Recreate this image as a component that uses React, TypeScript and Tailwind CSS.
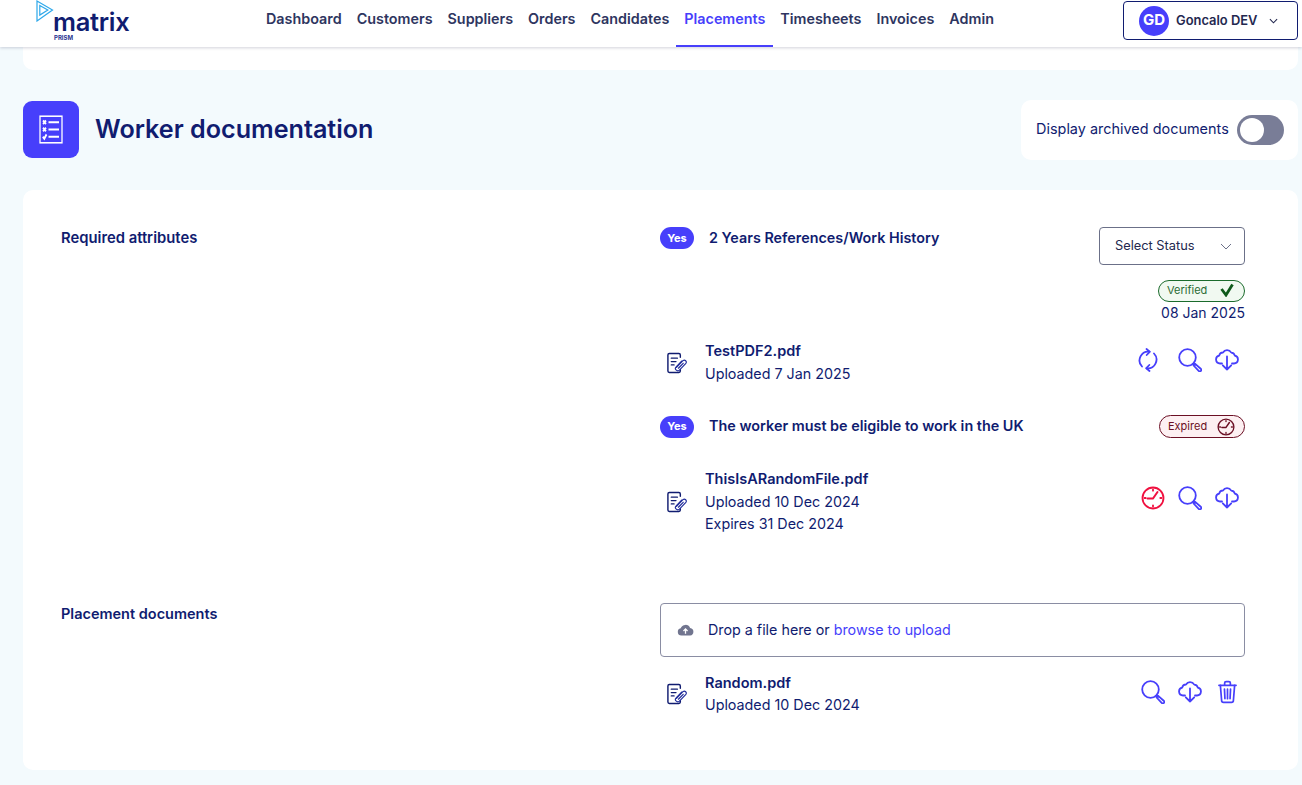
import React from "react";

const stroke = { fill: "none", stroke: "currentColor", strokeWidth: 1.8, strokeLinecap: "round" as const, strokeLinejoin: "round" as const };

function Search({ className = "" }: { className?: string }) {
  return (
    <svg viewBox="0 0 24 24" className={className} {...stroke}>
      <circle cx="9.500" cy="9.500" r="8.300" />
      <path d="M15.500 15.500l1.500 1.500" />
      <path d="M17.200 15.800l5.800 5.200a1.500 1.500 0 0 1-2.100 2.100L15.600 17.500a1.200 1.200 0 0 1 1.600-1.700z" />
    </svg>
  );
}
function CloudDown({ className = "" }: { className?: string }) {
  return (
    <svg viewBox="0 0 24 22" className={className} {...stroke}>
      <path d="M7 14.500H5a4 4 0 0 1-.8-7.900A3.800 3.800 0 0 1 8 3.500 5 5 0 0 1 12 1.200a5 5 0 0 1 4.300 2.400 3.800 3.800 0 0 1 3.500 3 4 4 0 0 1-.8 7.900H17" />
      <path d="M12 7.500v13M7.800 16.300l4.200 4.200 4.200-4.200" />
    </svg>
  );
}
function Refresh({ className = "" }: { className?: string }) {
  return (
    <svg viewBox="0 0 20 24" className={className} {...stroke}>
      <path d="M4 18.500A8.800 8.800 0 0 1 11.500 3.700" />
      <path d="M8.500 1l3.200 2.800L8.700 7" />
      <path d="M16 5.500A8.800 8.800 0 0 1 8.500 20.300" />
      <path d="M11.500 23l-3.200-2.800 3-3.200" />
    </svg>
  );
}
function Clock({ className = "" }: { className?: string }) {
  return (
    <svg viewBox="0 0 24 24" className={className} {...stroke}>
      <circle cx="12" cy="12" r="10.500" />
      <path d="M12 12.500l4.500-6.500M12 12.500H6.500" strokeWidth="2" />
      <path d="M12 3.500v1.200M12 19.300v1.200M3.500 12h1.200M19.300 12h1.200" />
    </svg>
  );
}
function Trash({ className = "" }: { className?: string }) {
  return (
    <svg viewBox="0 0 20 24" className={className} {...stroke}>
      <path d="M1 5h18M7 5V2.500A1.500 1.500 0 0 1 8.500 1h3A1.500 1.500 0 0 1 13 2.500V5" />
      <path d="M2.500 5l1.300 16a2 2 0 0 0 2 2h8.400a2 2 0 0 0 2-2L17.500 5" />
      <path d="M6.800 9l.5 10M10 9v10M13.200 9l-.5 10" />
    </svg>
  );
}
function FileClip() {
  return (
    <svg viewBox="0 0 22 22" className="w-[21px] h-[22px] shrink-0">
      <path d="M15 5V2.500A1.500 1.500 0 0 0 13.500 1h-10A1.500 1.500 0 0 0 2 2.500v17A1.500 1.500 0 0 0 3.500 21h10a1.500 1.500 0 0 0 1.500-1.500V18" fill="none" stroke="#101c70" strokeWidth="1.500" strokeLinecap="round" />
      <path d="M5.500 6h6.500M5.500 9.500h5M5.500 13h3" fill="none" stroke="#101c70" strokeWidth="1.300" strokeLinecap="round" />
      <path d="M11 15.500l6.800-7a2.100 2.100 0 0 1 3 2.900l-6.700 7a2.600 2.600 0 0 1-3.600-.1 2.300 2.300 0 0 1 .1-3.200l6-6.200M13 16.500l5-5.200" fill="none" stroke="#1e2a9a" strokeWidth="1.200" strokeLinecap="round" />
    </svg>
  );
}

function Yes() {
  return (
    <span className="w-[34px] h-[22px] rounded-full bg-[#473ffb] text-white text-[11px] font-bold flex items-center justify-center shrink-0">Yes</span>
  );
}

function FileRow({ name, lines, actions }: { name: string; lines: string[]; actions: React.ReactNode }) {
  return (
    <div className="flex items-center">
      <div className="w-[45px] pl-[6px]">
        <FileClip />
      </div>
      <div className="flex-1 text-[14.300px] leading-[22.500px] text-[#101c70]">
        <div className="font-semibold text-[14.500px]">{name}</div>
        {lines.map((l) => (
          <div key={l}>{l}</div>
        ))}
      </div>
      {actions}
    </div>
  );
}

const nav = ["Dashboard", "Customers", "Suppliers", "Orders", "Candidates", "Placements", "Timesheets", "Invoices", "Admin"];

export default function App() {
  return (
    <div className="h-[785px] overflow-hidden bg-[#f3fafd] font-['Inter',sans-serif] text-[#101c70]">
      <header className="h-[47px] bg-white shadow-[0_1px_3px_rgba(30,30,70,0.2)] relative z-10 flex">
        <div className="w-[266px] relative">
          <svg viewBox="0 0 18 22" className="absolute left-[36px] top-0 w-[18px] h-[22px]" fill="none" stroke="#2ea8ea" strokeWidth="1.200">
            <path d="M1 1l15.500 9L1 21z" />
            <path d="M3.800 5.500l8 4.600-8 5z" />
          </svg>
          <div className="absolute left-[53px] top-[10px] text-[25.500px] leading-[24px] font-semibold text-[#101c70] tracking-[-0.3px]">matrix</div>
          <div className="absolute left-[54px] top-[35px] text-[6px] leading-[6px] font-bold text-[#2a3590]">PRISM</div>
        </div>
        <nav className="flex gap-[15px] text-[14.350px] font-semibold text-[#2e3560]">
          {nav.map((n) => (
            <a
              key={n}
              className={
                n === "Placements"
                  ? "h-[47px] leading-[38px] text-[#473ffb] relative after:absolute after:left-[-8px] after:right-[-8px] after:bottom-0 after:h-[2px] after:bg-[#473ffb]"
                  : "h-[47px] leading-[38px]"
              }
            >
              {n}
            </a>
          ))}
        </nav>
        <div className="ml-auto mr-[4px] mt-[1px] w-[175px] h-[39px] border border-[#101c70] rounded-[4px] flex items-center pl-[15px]">
          <span className="w-[30px] h-[30px] rounded-full bg-[#473ffb] text-white font-bold text-[15px] flex items-center justify-center">GD</span>
          <span className="ml-[7px] text-[12.900px] font-semibold text-[#23284f]">Goncalo DEV</span>
          <svg viewBox="0 0 10 6" className="ml-[12px] w-[9px] h-[6px]" fill="none" stroke="#23284f" strokeWidth="1.200">
            <path d="M1 1l4 4 4-4" />
          </svg>
        </div>
      </header>

      <main className="pl-[23px] pr-[4px]">
        <div className="h-[23px] bg-white rounded-b-[10px]" />

        <div className="mt-[30px] h-[60px] flex items-center justify-between">
          <div className="flex items-center gap-[16px] -mt-[2px]">
            <div className="w-[56px] h-[57px] rounded-[9px] bg-[#473ffb] flex items-center justify-center">
              <svg viewBox="0 0 24 24" className="w-[24px] h-[29px]" fill="none" stroke="white" strokeWidth="1.300" preserveAspectRatio="none">
                <rect x="1" y="1" width="22" height="22" />
                <path d="M9.500 6h10.500M9.500 12h10.500M9.500 18h10.500" strokeWidth="1.700" />
                <path d="M4 4.500l3 3M7 4.500l-3 3M4 10.500l3 3M7 10.500l-3 3M3.800 18l1.500 1.600L7.500 16" strokeWidth="1.800" />
              </svg>
            </div>
            <h1 className="mt-[2px] text-[25.150px] font-semibold text-[#101c70]">Worker documentation</h1>
          </div>
          <div className="w-[277px] h-[60px] bg-white rounded-[10px] flex items-center pl-[15px] gap-[8px]">
            <span className="-mt-[2px] text-[14.450px] text-[#101c70]">Display archived documents</span>
            <span className="w-[47px] h-[30px] rounded-full bg-[#797d97] flex items-center pl-[3px]">
              <span className="w-[24px] h-[24px] rounded-full bg-white" />
            </span>
          </div>
        </div>

        <section className="mt-[30px] h-[580px] bg-white rounded-[10px] pl-[38px] pr-[53px] pt-[37px]">
          <div className="grid grid-cols-[599px_1fr]">
            <div className="text-[14.800px] leading-[22px] font-semibold">Required attributes</div>
            <div>
              <div className="flex items-start">
                <div className="flex items-center gap-[15px]">
                  <Yes />
                  <span className="text-[14.350px] font-semibold">2 Years References/Work History</span>
                </div>
                <button className="ml-auto w-[146px] h-[38px] border border-[#6b7088] rounded-[4px] flex items-center justify-between pl-[15px] pr-[12px] text-[12.800px] text-[#23284f]">
                  Select Status
                  <svg viewBox="0 0 12 7" className="w-[12px] h-[7px]" fill="none" stroke="#6b7088" strokeWidth="1">
                    <path d="M1 1l5 5 5-5" />
                  </svg>
                </button>
              </div>
              <div className="mt-[15px] flex flex-col items-end">
                <span className="w-[87px] h-[22px] pb-[2px] rounded-full border border-[#1b6b2c] bg-[#f1f9f1] flex items-center justify-between pl-[8px] pr-[10px] text-[11px] text-[#2b6b35]">
                  Verified
                  <svg viewBox="0 0 14 13" className="w-[14px] h-[14px]" fill="none" stroke="#0f5a1b" strokeWidth="2.800">
                    <path d="M1.500 5.500l4.500 6L12.500 1" />
                  </svg>
                </span>
                <span className="text-[14px] leading-[22px]">08 Jan 2025</span>
              </div>
              <div className="mt-[16px]">
                <FileRow
                  name="TestPDF2.pdf"
                  lines={["Uploaded 7 Jan 2025"]}
                  actions={
                    <div className="flex items-center text-[#473ffb] -mt-[5px] pr-[6px]">
                      <Refresh className="w-[20px] h-[24px]" />
                      <Search className="ml-[20px] w-[24px] h-[24px]" />
                      <CloudDown className="ml-[13px] w-[24px] h-[22px]" />
                    </div>
                  }
                />
              </div>
              <div className="mt-[30px] flex items-center">
                <Yes />
                <span className="ml-[15px] -mt-[2px] text-[14.400px] font-semibold">The worker must be eligible to work in the UK</span>
                <span className="ml-auto w-[86px] h-[23px] rounded-full border border-[#6b0f24] bg-[#fdf0f2] flex items-center justify-between pl-[8px] pr-[9px] text-[11px] text-[#6b0f24]">
                  Expired
                  <Clock className="w-[18px] h-[18px]" />
                </span>
              </div>
              <div className="mt-[30px]">
                <FileRow
                  name="ThisIsARandomFile.pdf"
                  lines={["Uploaded 10 Dec 2024", "Expires 31 Dec 2024"]}
                  actions={
                    <div className="flex items-center text-[#473ffb] -mt-[8px] pr-[6px]">
                      <Clock className="w-[24px] h-[24px] text-[#f0103f]" />
                      <Search className="ml-[13px] w-[24px] h-[24px]" />
                      <CloudDown className="ml-[13px] w-[24px] h-[22px]" />
                    </div>
                  }
                />
              </div>
            </div>
          </div>

          <div className="mt-[67px] grid grid-cols-[599px_1fr]">
            <div className="text-[14.500px] leading-[22px] font-semibold">Placement documents</div>
            <div>
              <div className="h-[54px] border border-[#8a8da3] rounded-[4px] flex items-center pl-[16px] text-[14.300px]">
                <svg viewBox="0 0 18 13" className="w-[17px] h-[12px]">
                  <path d="M4.500 12.500a4 4 0 0 1-.7-7.900A5.500 5.500 0 0 1 14 4.200a4.200 4.200 0 0 1 0 8.300z" fill="#71758f" />
                  <path d="M9 10.500V5.500M6.800 7.500L9 5.300l2.200 2.200" stroke="white" strokeWidth="1.400" fill="none" />
                </svg>
                <span className="ml-[14px]">Drop a file here or <span className="text-[#473ffb]">browse to upload</span></span>
              </div>
              <div className="mt-[15px]">
                <FileRow
                  name="Random.pdf"
                  lines={["Uploaded 10 Dec 2024"]}
                  actions={
                    <div className="flex items-center text-[#473ffb] -mt-[5px] pr-[8px]">
                      <Search className="w-[24px] h-[24px]" />
                      <CloudDown className="ml-[13px] w-[24px] h-[22px]" />
                      <Trash className="ml-[16px] w-[19px] h-[24px]" />
                    </div>
                  }
                />
              </div>
            </div>
          </div>
        </section>
      </main>
    </div>
  );
}
